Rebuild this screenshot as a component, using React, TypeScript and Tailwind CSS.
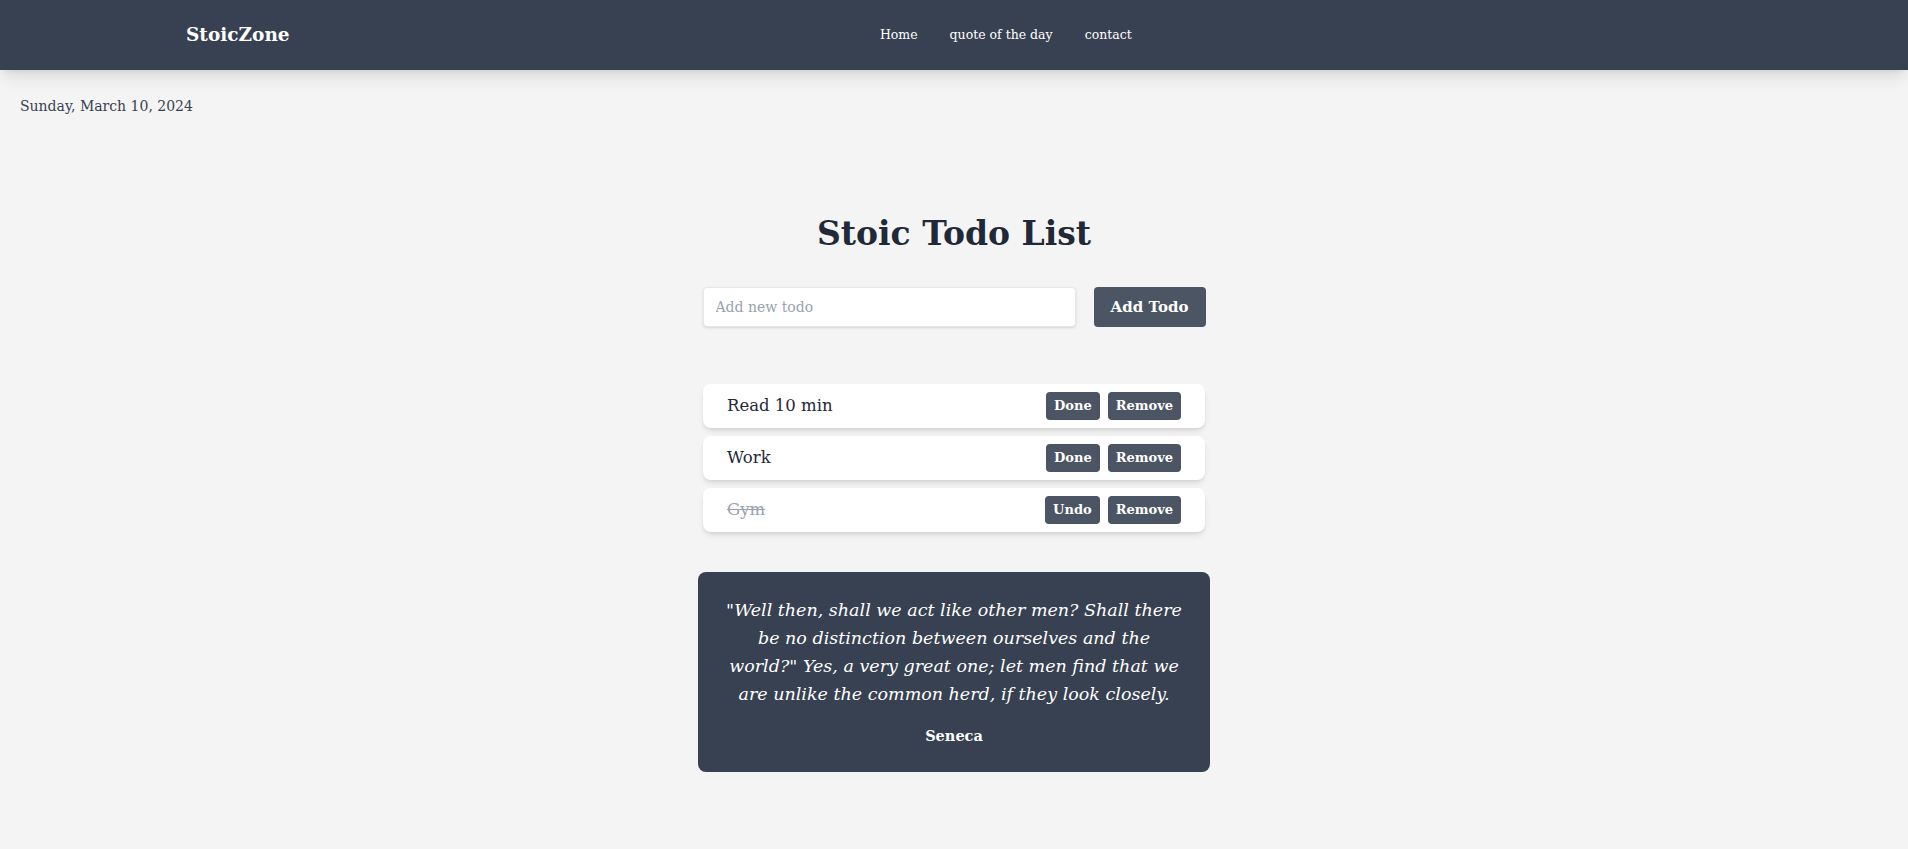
import React from "react";

const serif = { fontFamily: '"DejaVu Serif", Georgia, serif' };

type Todo = { text: string; done: boolean };

const todos: Todo[] = [
  { text: "Read 10 min", done: false },
  { text: "Work", done: false },
  { text: "Gym", done: true },
];

export default function App() {
  return (
    <div className="min-h-[849px] bg-[#f4f4f4] text-[#1f2937] font-['DejaVu_Serif',Georgia,serif]" style={serif}>
      <header className="relative z-10 h-[70px] bg-[#374151] shadow-lg">
        <div className="mx-auto flex h-full max-w-[1536px] items-center">
          <div className="text-[18.5px] font-bold text-white">StoicZone</div>
          <nav className="flex flex-1 justify-center gap-8 text-[12.5px] text-white">
            <a href="#">Home</a>
            <a href="#">quote of the day</a>
            <a href="#">contact</a>
          </nav>
        </div>
      </header>

      <div className="pl-5 pt-6 text-[14px] leading-6 text-[#374151]">Sunday, March 10, 2024</div>

      <main className="flex flex-col items-center">
        <h1 className="mt-[96px] text-[33px] font-bold leading-10 text-[#1f2937]">Stoic Todo List</h1>

        <div className="mt-[33px] flex w-[503px] items-center gap-[18px]">
          <input
            className="h-10 flex-1 rounded border border-gray-200 bg-white px-3 text-[14px] shadow-sm outline-none placeholder:text-gray-400"
            placeholder="Add new todo"
          />
          <button className="h-10 w-[112px] rounded bg-[#4b5563] text-[15px] font-bold text-white">Add Todo</button>
        </div>

        <ul className="mt-[57px] flex w-[502px] flex-col gap-2">
          {todos.map((t) => (
            <li key={t.text} className="flex h-11 items-center justify-between rounded-lg bg-white px-6 shadow-md">
              <span className={t.done ? "text-[16.5px] text-gray-400 line-through" : "text-[16.5px] text-[#1f2937]"}>
                {t.text}
              </span>
              <div className="flex gap-2">
                <button className="h-7 rounded bg-[#4b5563] px-2 text-[13px] font-bold text-white">
                  {t.done ? "Undo" : "Done"}
                </button>
                <button className="h-7 rounded bg-[#4b5563] px-2 text-[13px] font-bold text-white">Remove</button>
              </div>
            </li>
          ))}
        </ul>

        <div className="mt-10 w-[512px] rounded-lg bg-[#374151] p-6 text-center text-white">
          <p className="text-[17.5px] italic leading-7">
            "Well then, shall we act like other men? Shall there
            <br />
            be no distinction between ourselves and the
            <br />
            world?" Yes, a very great one; let men find that we
            <br />
            are unlike the common herd, if they look closely.
          </p>
          <p className="mt-4 text-[14.5px] font-bold leading-6">Seneca</p>
        </div>
      </main>
    </div>
  );
}
